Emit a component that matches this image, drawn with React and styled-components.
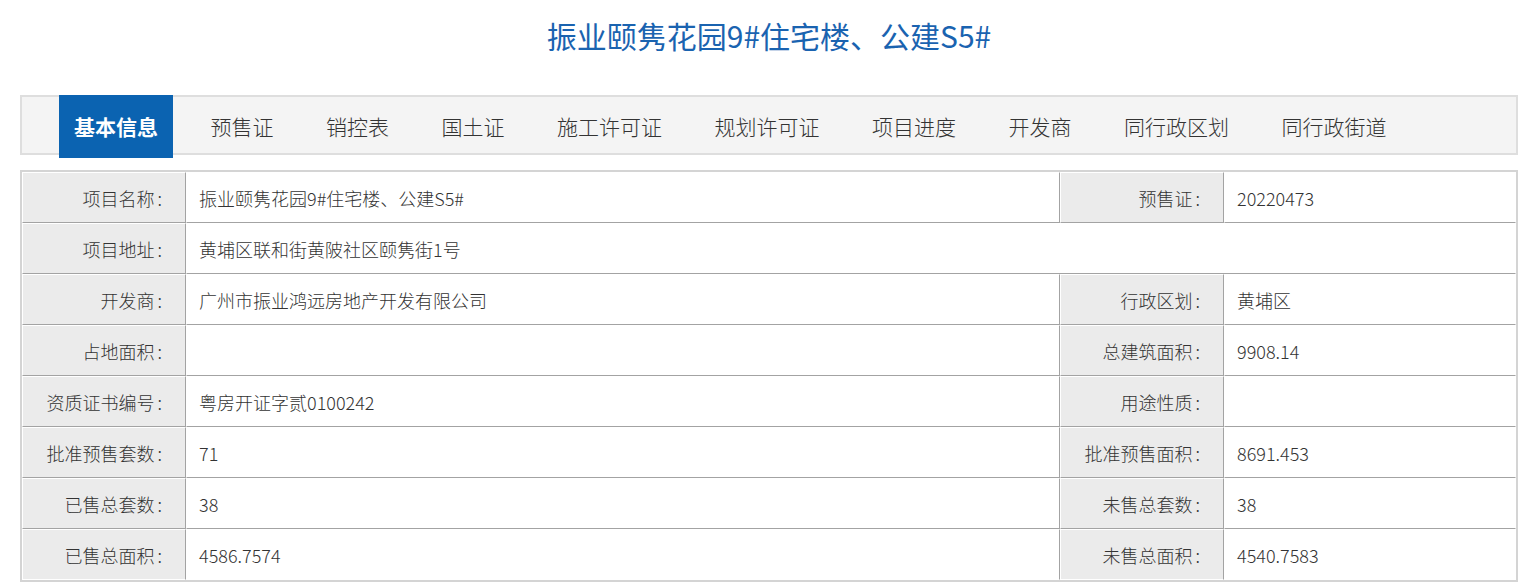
import React from "react";
import styled, { createGlobalStyle } from "styled-components";

const Global = createGlobalStyle`
  html, body { margin: 0; padding: 0; background: #fff; }
  body { font-family: "Noto Sans CJK SC", "Microsoft YaHei", sans-serif; color: #333; }
`;

const Page = styled.div`
  width: 1498px;
  margin-left: 20px;
`;

const Title = styled.h1`
  margin: 0 0 40px;
  padding-top: 15px;
  font-size: 30px;
  line-height: 40px;
  font-weight: 400;
  color: #1a63b0;
  text-align: center;
`;

const TabBar = styled.div`
  height: 56px;
  border: 2px solid #dedede;
  background: #f4f4f4;
`;

const TabList = styled.ul`
  list-style: none;
  margin: -2px 0 0;
  padding: 0 0 0 37px;
  display: flex;
  align-items: flex-start;
  gap: 22.5px;
`;

const Tab = styled.li`
  height: 63px;
  line-height: 63px;
  padding: 0 15px;
  font-size: 21px;
  white-space: nowrap;
  color: ${(p) => (p.$active ? "#fff" : "#333")};
  background: ${(p) => (p.$active ? "#0b63b1" : "transparent")};
  font-weight: ${(p) => (p.$active ? 700 : 300)};
`;

const InfoGrid = styled.div`
  margin-top: 15px;
  border: 2px solid #d4d4d4;
  display: grid;
  grid-template-columns: 164px 874px 164px 292px;
`;

const Cell = styled.div`
  box-sizing: border-box;
  height: 51px;
  display: flex;
  align-items: center;
  font-size: 18px;
  font-weight: 300;
  color: #333;
  white-space: nowrap;
  border-top: 1px solid #fff;
  border-left: 1px solid #fff;
  border-bottom: 1px solid ${(p) => (p.$last ? "#fff" : "#a3a3a3")};
  border-right: 1px solid ${(p) => (p.$edge ? "#fff" : "#a3a3a3")};
`;

const Label = styled(Cell)`
  background: #ebebeb;
  justify-content: flex-end;
  padding-right: 23px;
`;

const Colon = styled.span`
  margin-left: 3px;
`;

const Value = styled(Cell)`
  padding-left: 12px;
  grid-column: ${(p) => (p.$span ? `span ${p.$span}` : "auto")};
`;

const tabs = [
  "基本信息",
  "预售证",
  "销控表",
  "国土证",
  "施工许可证",
  "规划许可证",
  "项目进度",
  "开发商",
  "同行政区划",
  "同行政街道",
];

const rows = [
  [["项目名称", "振业颐隽花园9#住宅楼、公建S5#"], ["预售证", "20220473"]],
  [["项目地址", "黄埔区联和街黄陂社区颐隽街1号"]],
  [["开发商", "广州市振业鸿远房地产开发有限公司"], ["行政区划", "黄埔区"]],
  [["占地面积", ""], ["总建筑面积", "9908.14"]],
  [["资质证书编号", "粤房开证字贰0100242"], ["用途性质", ""]],
  [["批准预售套数", "71"], ["批准预售面积", "8691.453"]],
  [["已售总套数", "38"], ["未售总套数", "38"]],
  [["已售总面积", "4586.7574"], ["未售总面积", "4540.7583"]],
];

export default function App() {
  return (
    <>
      <Global />
      <Page>
        <Title>振业颐隽花园9#住宅楼、公建S5#</Title>
        <TabBar>
          <TabList>
            {tabs.map((t, i) => (
              <Tab key={t} $active={i === 0}>
                {t}
              </Tab>
            ))}
          </TabList>
        </TabBar>
        <InfoGrid>
          {rows.map((pairs, ri) => {
            const last = ri === rows.length - 1;
            return pairs.map(([label, value], pi) => {
              const lastPair = pi === pairs.length - 1;
              const span = pairs.length === 1 ? 3 : undefined;
              return (
                <React.Fragment key={`${ri}-${pi}`}>
                  <Label $last={last}>
                    {label}
                    <Colon>:</Colon>
                  </Label>
                  <Value $last={last} $span={span} $edge={lastPair && (pi === 1 || !!span)}>
                    {value}
                  </Value>
                </React.Fragment>
              );
            });
          })}
        </InfoGrid>
      </Page>
    </>
  );
}
